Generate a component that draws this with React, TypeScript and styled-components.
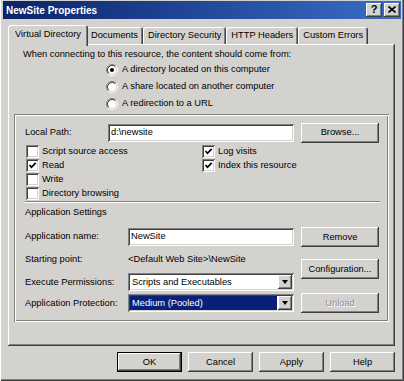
import styled, { createGlobalStyle } from "styled-components";

const FACE = "#d4d2ce";

const GlobalStyle = createGlobalStyle`
  html, body {
    margin: 0;
    padding: 0;
    background: ${FACE};
  }
  body {
    font-family: "Liberation Sans", Arial, sans-serif;
    font-size: 9.3px;
    line-height: 13px;
    color: #000;
  }
  * {
    box-sizing: border-box;
  }
`;

const raised = `
  box-shadow: inset -1px -1px #404040, inset 1px 1px #ffffff,
    inset -2px -2px #808080, inset 2px 2px ${FACE};
`;

const sunken = `
  box-shadow: inset 1px 1px #808080, inset -1px -1px #ffffff,
    inset 2px 2px #404040, inset -2px -2px ${FACE};
`;

const Window = styled.div`
  width: 404px;
  height: 381px;
  padding: 1px 3px 3px 3px;
  background: ${FACE};
  box-shadow: inset 1px 0 #ffffff, inset -1px -1px #404040, inset -2px -2px #808080;
  display: flex;
  flex-direction: column;
`;

const TitleBar = styled.div`
  height: 18px;
  display: flex;
  align-items: center;
  padding: 0 1px 0 3px;
  background: linear-gradient(90deg, #0a246a 0%, #3a6ec8 100%);
  color: #fff;
  font-weight: bold;
  font-size: 10px;
`;

const TitleText = styled.span`
  flex: 1;
`;

const TitleButton = styled.div<{ $gap?: number }>`
  width: 16px;
  height: 14px;
  margin-left: ${(p) => p.$gap ?? 0}px;
  background: ${FACE};
  ${raised}
  display: flex;
  align-items: center;
  justify-content: center;
  color: #000;
  font-size: 11px;
  font-weight: bold;
  padding-bottom: 1px;
`;

const Body = styled.div`
  padding: 6px 6px 0 5px;
  display: flex;
  flex-direction: column;
`;

const TabRow = styled.div`
  height: 19px;
  display: flex;
  align-items: flex-end;
  padding-left: 2px;
`;

const Tab = styled.div<{ $active?: boolean }>`
  position: relative;
  z-index: ${(p) => (p.$active ? 1 : 0)};
  height: ${(p) => (p.$active ? 21 : 17)}px;
  margin: 0 ${(p) => (p.$active ? -2 : 0)}px ${(p) => (p.$active ? -2 : 0)}px;
  padding: 0 ${(p) => (p.$active ? 7 : 5)}px ${(p) => (p.$active ? 3 : 0)}px;
  background: ${FACE};
  border-radius: 3px 3px 0 0;
  box-shadow: inset 1px 1px #ffffff, inset -1px 0 #404040, inset -2px 0 #808080;
  display: flex;
  align-items: center;
  white-space: nowrap;
`;

const Panel = styled.div`
  height: 302px;
  padding: 4px 6px 24px 6px;
  ${raised}
  display: flex;
  flex-direction: column;
`;

const Intro = styled.div`
  height: 13px;
  margin-left: 9px;
`;

const RadioList = styled.div`
  margin-left: 92px;
  display: flex;
  flex-direction: column;
`;

const OptionRow = styled.div<{ $h: number }>`
  height: ${(p) => p.$h}px;
  display: flex;
  align-items: center;
  white-space: nowrap;
`;

const GroupBox = styled.div`
  margin-top: 2px;
  height: 208px;
  padding: 8px 6px 9px 11px;
  box-shadow: inset 1px 1px #808080, inset -1px -1px #ffffff,
    inset 2px 2px #ffffff, inset -2px -2px #808080;
  display: flex;
  flex-direction: column;
`;

const FieldRow = styled.div<{ $h: number }>`
  height: ${(p) => p.$h}px;
  display: flex;
  align-items: center;
`;

const Label = styled.div<{ $w: number }>`
  width: ${(p) => p.$w}px;
  flex: none;
  white-space: nowrap;
`;

const TextField = styled.div<{ $w: number }>`
  width: ${(p) => p.$w}px;
  height: 18px;
  padding: 0 3px;
  background: #fff;
  ${sunken}
  display: flex;
  align-items: center;
  white-space: nowrap;
`;

const Select = styled.div`
  width: 166px;
  height: 18px;
  padding: 2px;
  background: #fff;
  ${sunken}
  display: flex;
`;

const SelectValue = styled.div<{ $focused?: boolean }>`
  flex: 1;
  padding-left: 2px;
  margin-right: 1px;
  background: ${(p) => (p.$focused ? "#0a1f78" : "transparent")};
  color: ${(p) => (p.$focused ? "#fff" : "#000")};
  display: flex;
  align-items: center;
  white-space: nowrap;
`;

const ArrowButton = styled.div`
  width: 14px;
  height: 14px;
  background: ${FACE};
  ${raised}
  display: flex;
  align-items: center;
  justify-content: center;

  &::after {
    content: "";
    border-left: 3.5px solid transparent;
    border-right: 3.5px solid transparent;
    border-top: 4px solid #000;
  }
`;

const Button = styled.button<{ $w: number; $mt?: number; $default?: boolean }>`
  width: ${(p) => p.$w}px;
  height: 20px;
  margin-top: ${(p) => p.$mt ?? 0}px;
  flex: none;
  padding: 0;
  border: none;
  background: ${FACE};
  font: inherit;
  color: #000;
  ${raised}
  ${(p) =>
    p.$default &&
    `box-shadow: inset 0 0 0 1px #000, inset -2px -2px #404040, inset 2px 2px #ffffff, inset -3px -3px #808080;`}

  &:disabled {
    color: #8c8c8c;
    text-shadow: 1px 1px #ffffff;
  }
`;

const CheckGrid = styled.div`
  margin-top: 1px;
  display: grid;
  grid-template-columns: 176px 1fr;
  grid-auto-rows: 14px;
`;

const CheckItem = styled.div<{ $col: number; $row: number }>`
  grid-column: ${(p) => p.$col};
  grid-row: ${(p) => p.$row};
  display: flex;
  align-items: center;
  white-space: nowrap;
`;

const Box = styled.span`
  width: 13px;
  height: 13px;
  margin: 0 3px 0 1px;
  background: #fff;
  ${sunken}
  display: flex;
  align-items: center;
  justify-content: center;
`;

const Separator = styled.div`
  margin: 1px 3px 0 0;
  height: 2px;
  border-top: 1px solid #808080;
  border-bottom: 1px solid #ffffff;
`;

const SectionTitle = styled.div`
  margin-top: 3px;
  height: 13px;
`;

const AppArea = styled.div`
  margin-top: 7px;
  display: flex;
`;

const AppFields = styled.div`
  width: 269px;
  display: flex;
  flex-direction: column;
`;

const AppButtons = styled.div`
  margin-left: 7px;
  display: flex;
  flex-direction: column;
`;

const Footer = styled.div`
  margin-top: 6px;
  display: flex;
  justify-content: flex-end;
  gap: 6px;
`;

const Radio = ({ checked }: { checked?: boolean }) => (
  <svg width="12" height="12" viewBox="0 0 12 12" style={{ marginRight: 4, flex: "none" }}>
    <circle cx="6" cy="6" r="4.5" fill="#fff" />
    <path d="M2.11 9.89 A5.5 5.5 0 0 1 9.89 2.11" fill="none" stroke="#808080" strokeWidth="1" />
    <path d="M9.89 2.11 A5.5 5.5 0 0 1 2.11 9.89" fill="none" stroke="#fff" strokeWidth="1" />
    <path d="M2.82 9.18 A4.5 4.5 0 0 1 9.18 2.82" fill="none" stroke="#404040" strokeWidth="1" />
    <path d="M9.18 2.82 A4.5 4.5 0 0 1 2.82 9.18" fill="none" stroke={FACE} strokeWidth="1" />
    {checked && <circle cx="6" cy="6" r="2" fill="#000" />}
  </svg>
);

const Check = ({ label, checked, col, row }: { label: string; checked?: boolean; col: number; row: number }) => (
  <CheckItem $col={col} $row={row}>
    <Box>
      {checked && (
        <svg width="9" height="9" viewBox="0 0 9 9">
          <polyline points="1.5,4 3.5,6.3 7.7,1.8" fill="none" stroke="#000" strokeWidth="1.7" />
        </svg>
      )}
    </Box>
    {label}
  </CheckItem>
);

const tabs = ["Virtual Directory", "Documents", "Directory Security", "HTTP Headers", "Custom Errors"];

export default function App() {
  return (
    <>
      <GlobalStyle />
      <Window>
        <TitleBar>
          <TitleText>NewSite Properties</TitleText>
          <TitleButton>?</TitleButton>
          <TitleButton $gap={2}>
            <svg width="8" height="7" viewBox="0 0 8 7">
              <path d="M0.5 0.5 L7.5 6.5 M7.5 0.5 L0.5 6.5" stroke="#000" strokeWidth="1.6" />
            </svg>
          </TitleButton>
        </TitleBar>
        <Body>
          <TabRow>
            {tabs.map((t, i) => (
              <Tab key={t} $active={i === 0}>
                {t}
              </Tab>
            ))}
          </TabRow>
          <Panel>
            <Intro>When connecting to this resource, the content should come from:</Intro>
            <RadioList>
              <OptionRow $h={17}>
                <Radio checked />A directory located on this computer
              </OptionRow>
              <OptionRow $h={17}>
                <Radio />A share located on another computer
              </OptionRow>
              <OptionRow $h={17}>
                <Radio />A redirection to a URL
              </OptionRow>
            </RadioList>
            <GroupBox>
              <FieldRow $h={21}>
                <Label $w={83}>Local Path:</Label>
                <TextField $w={186}>d:\newsite</TextField>
                <Button $w={78} style={{ marginLeft: 7 }}>
                  Browse...
                </Button>
              </FieldRow>
              <CheckGrid>
                <Check col={1} row={1} label="Script source access" />
                <Check col={1} row={2} label="Read" checked />
                <Check col={1} row={3} label="Write" />
                <Check col={1} row={4} label="Directory browsing" />
                <Check col={2} row={1} label="Log visits" checked />
                <Check col={2} row={2} label="Index this resource" checked />
              </CheckGrid>
              <Separator />
              <SectionTitle>Application Settings</SectionTitle>
              <AppArea>
                <AppFields>
                  <FieldRow $h={21}>
                    <Label $w={103}>Application name:</Label>
                    <TextField $w={166}>NewSite</TextField>
                  </FieldRow>
                  <FieldRow $h={24}>
                    <Label $w={103}>Starting point:</Label>
                    {"<Default Web Site>\\NewSite"}
                  </FieldRow>
                  <FieldRow $h={22}>
                    <Label $w={103}>Execute Permissions:</Label>
                    <Select>
                      <SelectValue>Scripts and Executables</SelectValue>
                      <ArrowButton />
                    </Select>
                  </FieldRow>
                  <FieldRow $h={20}>
                    <Label $w={103}>Application Protection:</Label>
                    <Select>
                      <SelectValue $focused>Medium (Pooled)</SelectValue>
                      <ArrowButton />
                    </Select>
                  </FieldRow>
                </AppFields>
                <AppButtons>
                  <Button $w={78} $mt={1}>
                    Remove
                  </Button>
                  <Button $w={78} $mt={12}>
                    Configuration...
                  </Button>
                  <Button $w={78} $mt={14} disabled>
                    Unload
                  </Button>
                </AppButtons>
              </AppArea>
            </GroupBox>
          </Panel>
          <Footer>
            <Button $w={65} $default>
              OK
            </Button>
            <Button $w={65}>Cancel</Button>
            <Button $w={65}>Apply</Button>
            <Button $w={65}>Help</Button>
          </Footer>
        </Body>
      </Window>
    </>
  );
}
